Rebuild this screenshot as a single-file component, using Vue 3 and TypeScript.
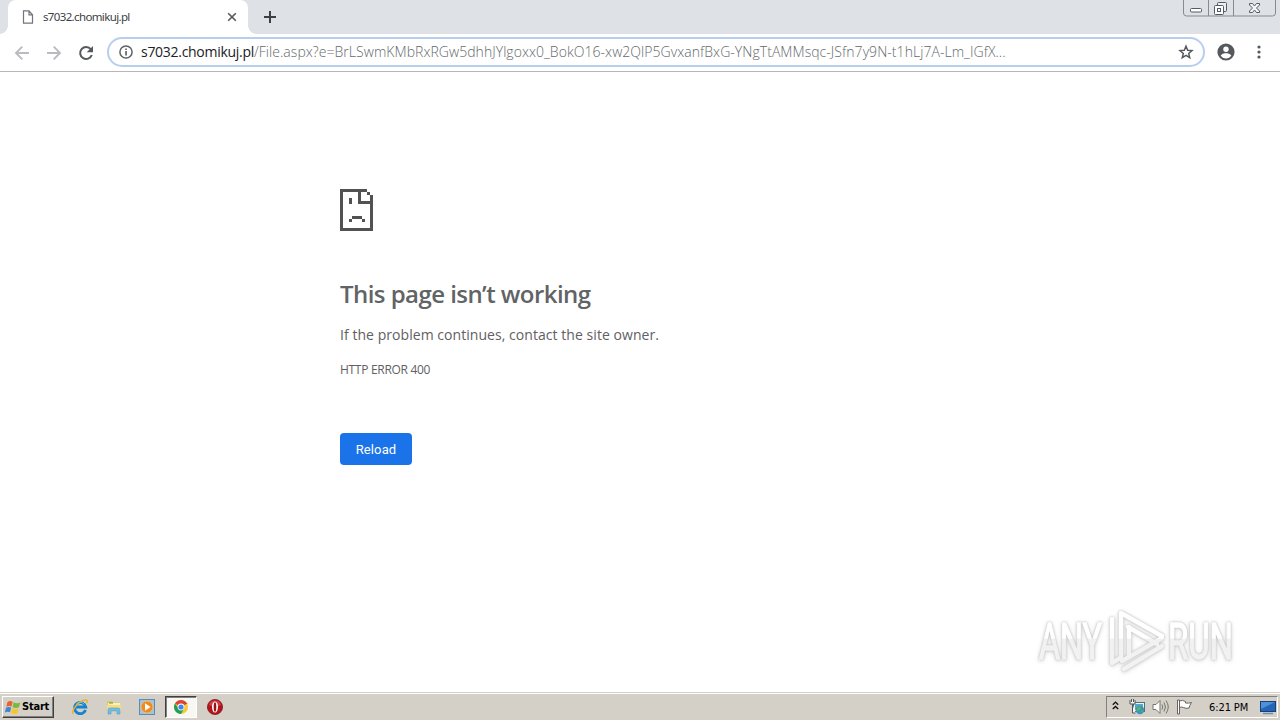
<script setup lang="ts">
const host: string = 's7032.chomikuj.pl'
const path: string = '/File.aspx?e=BrLSwmKMbRxRGw5dhhJYlgoxx0_BokO16-xw2QlP5GvxanfBxG-YNgTtAMMsqc-JSfn7y9N-t1hLj7A-Lm_IGfX...'
</script>

<template>
  <div class="screen">
    <header class="tabstrip">
      <div class="tab">
        <svg class="doc" width="12" height="14" viewBox="0 0 12 14" fill="none" stroke="#72757a" stroke-width="1.2">
          <path d="M1.500 .8h5.500l3.500 4v8.400h-9zM7 .8v4h3.500" />
        </svg>
        <span class="tab-title">{{ host }}</span>
        <svg class="tab-close" width="10" height="10" viewBox="0 0 10 10" stroke="#55595e" stroke-width="1.600">
          <path d="M1.200 1.200l7.600 7.600M8.800 1.200L1.200 8.800" />
        </svg>
        <i class="foot left"></i><i class="foot right"></i>
      </div>
      <svg class="plus" width="12" height="12" viewBox="0 0 12 12" stroke="#3c4043" stroke-width="2">
        <path d="M6 0v12M0 6h12" />
      </svg>
      <svg class="window-buttons" width="94" height="18" viewBox="0 0 94 18" fill="none" stroke="#868b93">
        <path d="M.5 0v13q0 3 3 3h86q3 0 3-3V0M25.500 0v16M50.500 0v16" />
        <g stroke="#555b65">
          <rect x="7.500" y="8.500" width="11" height="3.500" rx="1" fill="#fff" />
          <rect x="34.500" y="2.500" width="9" height="9" rx="1" fill="#eee" />
          <rect x="31.500" y="5.500" width="9" height="9" rx="1" fill="#fff" />
          <rect x="34.500" y="8.500" width="3" height="3" />
          <path d="M66.500 3.500h3l2 2.500 2-2.500h3v1.500l-3 3 3 3v1.500h-3l-2-2.500-2 2.500h-3V11l3-3-3-3z" fill="#f4f5f7" />
        </g>
      </svg>
    </header>

    <nav class="toolbar">
      <svg class="nav" width="16" height="16" viewBox="0 0 16 16" fill="none" stroke="#b9bbbe" stroke-width="1.9"><path d="M15 8H2M8.300 1.700L2 8l6.300 6.300" /></svg>
      <svg class="nav" width="16" height="16" viewBox="0 0 16 16" fill="none" stroke="#b9bbbe" stroke-width="1.9"><path d="M1 8h13M7.700 1.700L14 8l-6.300 6.300" /></svg>
      <svg class="nav" width="16" height="16" viewBox="0 0 16 16"><path d="M12.800 4.200A6 6 0 1 0 13.800 10" fill="none" stroke="#55595e" stroke-width="2" /><path d="M15 1v6.300H8.700z" fill="#55595e" /></svg>
      <div class="omnibox">
        <svg class="info" width="14" height="14" viewBox="0 0 14 14"><circle cx="7" cy="7" r="6.100" fill="none" stroke="#5f6368" stroke-width="1.500" /><path d="M6.200 6h1.700v4.500H6.200zM6.200 3.400h1.700V5H6.200z" fill="#5f6368" /></svg>
        <span class="url"><span class="host">{{ host }}</span><span class="path">{{ path }}</span></span>
        <svg class="star" width="16" height="16" viewBox="0 0 16 16" fill="none" stroke="#55595e" stroke-width="1.500"><path d="M8 2.200l1.700 4 4.300.4-3.300 2.900 1 4.200L8 11.400l-3.700 2.300 1-4.200L2 6.600l4.300-.4z" /></svg>
      </div>
      <svg class="avatar" width="18" height="18" viewBox="0 0 18 18"><circle cx="9" cy="9" r="8.600" fill="#55595e" /><circle cx="9" cy="6.300" r="2.700" fill="#fff" /><path d="M3.700 12.400c1-1.700 3.400-2.200 5.300-2.200s4.300.5 5.300 2.200C13.200 14.300 11.100 15.400 9 15.400s-4.200-1.100-5.300-3z" fill="#fff" /></svg>
      <svg class="dots" width="4" height="14" viewBox="0 0 4 14" fill="#55595e"><circle cx="2" cy="2" r="1.600" /><circle cx="2" cy="7" r="1.600" /><circle cx="2" cy="12" r="1.600" /></svg>
    </nav>

    <main class="page">
      <svg class="sad" width="33" height="42" viewBox="0 0 33 42" fill="#525252" shape-rendering="crispEdges">
        <path d="M0 0h27v3H3v36h27V15H18V3h3v9h9V6h3v36H0zM27 3h3v3h-3zM9 9h3v6H9zM12 27h10v3H12zM9 30h3v3H9zM22 30h3v3h-3z" />
      </svg>
      <h1>This page isn’t working</h1>
      <p class="message">If the problem continues, contact the site owner.</p>
      <p class="code">HTTP ERROR 400</p>
      <button type="button">Reload</button>
      <svg class="watermark" width="230" height="86" viewBox="0 0 230 86">
        <defs>
          <linearGradient id="shade" gradientUnits="userSpaceOnUse" x1="0" y1="0" x2="0" y2="76">
            <stop offset="0" stop-color="#fff" /><stop offset=".46" stop-color="#fff" />
            <stop offset=".48" stop-color="#f1f1f1" /><stop offset="1" stop-color="#f3f3f3" />
          </linearGradient>
        </defs>
        <g fill="url(#shade)" stroke="url(#shade)" stroke-width="1.500" font-family="Roboto, sans-serif" font-size="50">
          <text x="9" y="56" textLength="63" lengthAdjust="spacingAndGlyphs">ANY</text>
          <text x="138" y="56" textLength="65" lengthAdjust="spacingAndGlyphs">RUN</text>
        </g>
        <g fill="none" stroke="url(#shade)" stroke-width="4.500" stroke-linejoin="round" stroke-linecap="round">
          <path d="M91 54V10l41 23M82 16v44l8-5M98 24l29 17M99 24v30M94 66l38-23M92 58l40-23" />
        </g>
      </svg>
    </main>

    <footer class="taskbar">
      <button class="start" type="button">
        <svg width="16" height="15" viewBox="0 0 16 15">
          <path d="M2.500 2Q5 .3 7.700 1.800L6.500 6.500Q4 5.200 1.300 6.700z" fill="#e8622c" />
          <path d="M8.700 2.300Q12 4 15.300 2.400L14 7.300Q10.500 8.600 7.500 7z" fill="#79b943" />
          <path d="M1 7.700Q3.700 6.300 6.200 7.600L5 12.300Q2.500 11-.1 12.500z" fill="#3c86d4" />
          <path d="M7.200 8.200Q10.400 9.700 13.700 8.400L12.400 13.200Q9.400 14.700 6 13z" fill="#f8c52c" />
        </svg>
        <span>Start</span>
      </button>
      <div class="launch">
        <svg width="16" height="16" viewBox="0 0 16 16">
          <path d="M13.500 11A5.600 5.600 0 1 1 13.700 8H4" fill="none" stroke="#1681cf" stroke-width="2.900" />
          <path d="M4 6.300a4.300 4.300 0 0 1 8-1" fill="none" stroke="#66c6f4" stroke-width="1" />
          <path d="M1 15C-1 11 8 .5 14 1q2 .5.800 3.200" fill="none" stroke="#e4b52b" stroke-width="1.500" />
        </svg>
      </div>
      <div class="launch">
        <svg width="16" height="16" viewBox="0 0 16 16">
          <path d="M1 2h5l1 1.500h7V13H1z" fill="#e8c55b" /><path d="M2 4h12v4H2z" fill="#fbf0b0" />
          <path d="M1 6h14v7H1z" fill="#f5dc83" /><path d="M2 15v-4q0-2 2-2h8q2 0 2 2v4h-3v-3H5v3z" fill="#72bce6" stroke="#4c9ed0" stroke-width=".6" />
          <path d="M3 4h4" stroke="#44a66c" />
        </svg>
      </div>
      <div class="launch">
        <svg width="16" height="16" viewBox="0 0 16 16">
          <rect x=".5" y=".5" width="15" height="15" fill="#9bc5e8" stroke="#5c8bb8" />
          <circle cx="8" cy="8" r="6" fill="#f18a18" stroke="#fac06a" stroke-width=".8" /><path d="M6 4.300L11.600 8 6 11.700z" fill="#fff" />
        </svg>
      </div>
      <div class="launch active">
        <svg width="14" height="14" viewBox="0 0 14 14">
          <circle cx="7" cy="7" r="7" fill="#f5cb36" />
          <path d="M7 7L.94 3.500A7 7 0 0 1 13.060 3.500z" fill="#dc4437" /><path d="M7 7H3.500L.94 3.500A7 7 0 0 0 7 14l3-5.200z" fill="#209e5b" />
          <path d="M7 3.600h6.200" stroke="#dc4437" stroke-width="1" />
          <circle cx="7" cy="7" r="3.400" fill="#fff" /><circle cx="7" cy="7" r="2.600" fill="#4284ef" />
        </svg>
      </div>
      <div class="launch">
        <svg width="16" height="16" viewBox="0 0 16 16">
          <circle cx="8" cy="8" r="7.600" fill="#b5141c" stroke="#780d12" stroke-width=".7" /><path d="M2 6a6.300 6.300 0 0 1 12 0q-6 3-12 0" fill="#d04046" />
          <ellipse cx="8" cy="8" rx="3" ry="5.600" fill="#fff" /><ellipse cx="8" cy="8" rx="1.300" ry="4.800" fill="#9a1117" />
        </svg>
      </div>
      <div class="tray">
        <svg class="chevrons" width="7" height="9" viewBox="0 0 7 9" fill="none" stroke="#111" stroke-width="1.400"><path d="M.8 3.700l2.700-2.600 2.700 2.600M.8 8l2.700-2.600L6.200 8" /></svg>
        <svg class="net" width="16" height="16" viewBox="0 0 16 16">
          <rect x="4.500" y="3.500" width="11" height="9" fill="#e8f4f7" stroke="#516f7a" /><rect x="6" y="5" width="8" height="6" fill="#54a9c8" />
          <circle cx="11" cy="11" r="4.300" fill="#3b96b4" /><path d="M8 9q2-2 4-1l-1 3-3 1M12 12l2-1-1 3" fill="#5fb364" />
          <path d="M1 1v4h5V1M2.500 0v3M4.500 0v3M3.500 5v9h3" stroke="#555" fill="#f5f5f5" />
        </svg>
        <svg class="sound" width="17" height="16" viewBox="0 0 17 16" fill="none" stroke="#77756f" stroke-width="1">
          <path d="M1 5.500h3l4-4v13l-4-4H1z" fill="#fff" /><path d="M10 5.500q1.500 2.500 0 5M12 3.500q3 4.500 0 9M14 1.500q4.500 6.500 0 13" />
        </svg>
        <svg class="flag" width="16" height="16" viewBox="0 0 16 16" fill="#fff" stroke="#66645f"><path d="M1.500 1h2v14h-2zM3.500 2q3-1.500 6 .5v1.500q3 .5 6-.5-2 3-2.500 5.500-3 1-5.500-.5-2-1-4 0z" /></svg>
        <time>6:21 PM</time>
        <svg class="desktop" width="16" height="14" viewBox="0 0 16 14"><rect x=".5" y=".5" width="15" height="10" fill="#2465b8" stroke="#1c3d76" /><path d="M1 1h14L1 8z" fill="#4c91dc" /><path d="M3 12.500h10" stroke="#6e8db0" stroke-width="1.500" /></svg>
      </div>
    </footer>
  </div>
</template>

<style>
body { overflow: hidden; }
</style>

<style scoped>
* { box-sizing: border-box; }
.screen { width: 1280px; height: 720px; display: flex; flex-direction: column; background: #fff; font-family: "Open Sans", "Noto Sans", sans-serif; overflow: hidden; }
svg { display: block; flex: none; }
.tabstrip { height: 34px; flex: none; display: flex; background: #dee1e6; padding-left: 8px; }
.tab { position: relative; width: 240px; height: 34px; background: #fff; border-radius: 8px 8px 0 0; display: flex; align-items: center; padding: 0 11px 0 14px; }
.foot { position: absolute; bottom: 0; width: 8px; height: 8px; }
.foot.left { left: -8px; background: radial-gradient(circle at 0 0, transparent 7.500px, #fff 8px); }
.foot.right { right: -8px; background: radial-gradient(circle at 100% 0, transparent 7.500px, #fff 8px); }
.doc { margin-right: 9px; }
.tab-title { flex: 1; font: 11.500px/16px "Noto Sans", sans-serif; color: #3c4043; letter-spacing: -0.640px; white-space: nowrap; }
.plus { margin: 11px 0 0 16px; }
.window-buttons { margin: 0 3px 0 auto; }
.toolbar { height: 38px; flex: none; display: flex; align-items: center; border-bottom: 1px solid #b6b7ba; padding: 0 0 0 14px; }
.nav { margin-right: 16px; }
.nav + .nav + .nav { margin-right: 13px; }
.omnibox { width: 1098px; height: 30px; margin-top: -1px; border: 2px solid #b8ceee; border-radius: 15px; display: flex; align-items: center; padding: 0 9px 0 10px; flex: none; }
.info { margin-right: 8px; }
.url { flex: 1; white-space: nowrap; font-size: 14px; line-height: 20px; }
.host { color: #202124; letter-spacing: -0.290px; }
.path { color: #65696d; font-weight: 300; letter-spacing: 0.050px; }
.avatar { margin: -1px 0 0 12px; }
.dots { margin: -1px 0 0 22px; }
.page { position: relative; height: 620px; flex: none; padding: 117px 0 0 340px; color: #5f6063; }
h1 { margin: 46px 0 0; font: 600 24px/34px "Open Sans", sans-serif; color: #626365; letter-spacing: -0.550px; }
.message { margin: 13px 0 0; font-size: 14px; line-height: 22px; letter-spacing: 0.050px; }
.code { margin: 15px 0 0; font-size: 12px; line-height: 18px; letter-spacing: -0.300px; }
.page button { display: block; width: 72px; height: 32px; margin-top: 54px; border: 0; border-radius: 4px; padding: 0; background: #1a73e8; color: #fff; font: 13px/33px Roboto, sans-serif; letter-spacing: .1px; }
.watermark { position: absolute; left: 1030px; top: 531px; filter: drop-shadow(0 0 1px #bbb) drop-shadow(0 1px 2px #ddd); }
.taskbar { height: 28px; flex: none; background: #d4d0c8; border-top: 1px solid #d4d0c8; box-shadow: inset 0 1px #fff; display: flex; align-items: center; padding: 1px 2px 0; }
.start { width: 52px; height: 22px; display: flex; align-items: center; gap: 1px; padding: 0 2px; background: #d4d0c8; border: 1px solid; border-color: #fff #404040 #404040 #fff; box-shadow: inset -1px -1px #808080; color: #000; font: bold 11px/16px "DejaVu Sans Condensed", "DejaVu Sans", sans-serif; margin-right: 10px; }
.start span { letter-spacing: -0.200px; }
.launch { width: 32px; height: 22px; margin-right: 1.700px; display: flex; align-items: center; justify-content: center; }
.active { background: #f8f7f4; border: 1px solid; border-color: #404040 #fff #fff #404040; box-shadow: inset 1px 1px #808080; }
.tray { width: 172px; height: 22px; margin-left: auto; border: 1px solid; border-color: #808080 #fff #fff #808080; display: flex; align-items: center; padding-left: 5px; }
.chevrons { margin-top: -3px; }
.net { margin-left: 10px; }
.sound { margin-left: 7px; }
.flag { margin-left: 7px; }
time { margin: 1px 0 0 17px; width: 41px; color: #000; font: 11px/16px "DejaVu Sans Condensed", "DejaVu Sans", sans-serif; letter-spacing: -0.100px; white-space: nowrap; }
.desktop { margin: 1px 0 0 10px; }
</style>
